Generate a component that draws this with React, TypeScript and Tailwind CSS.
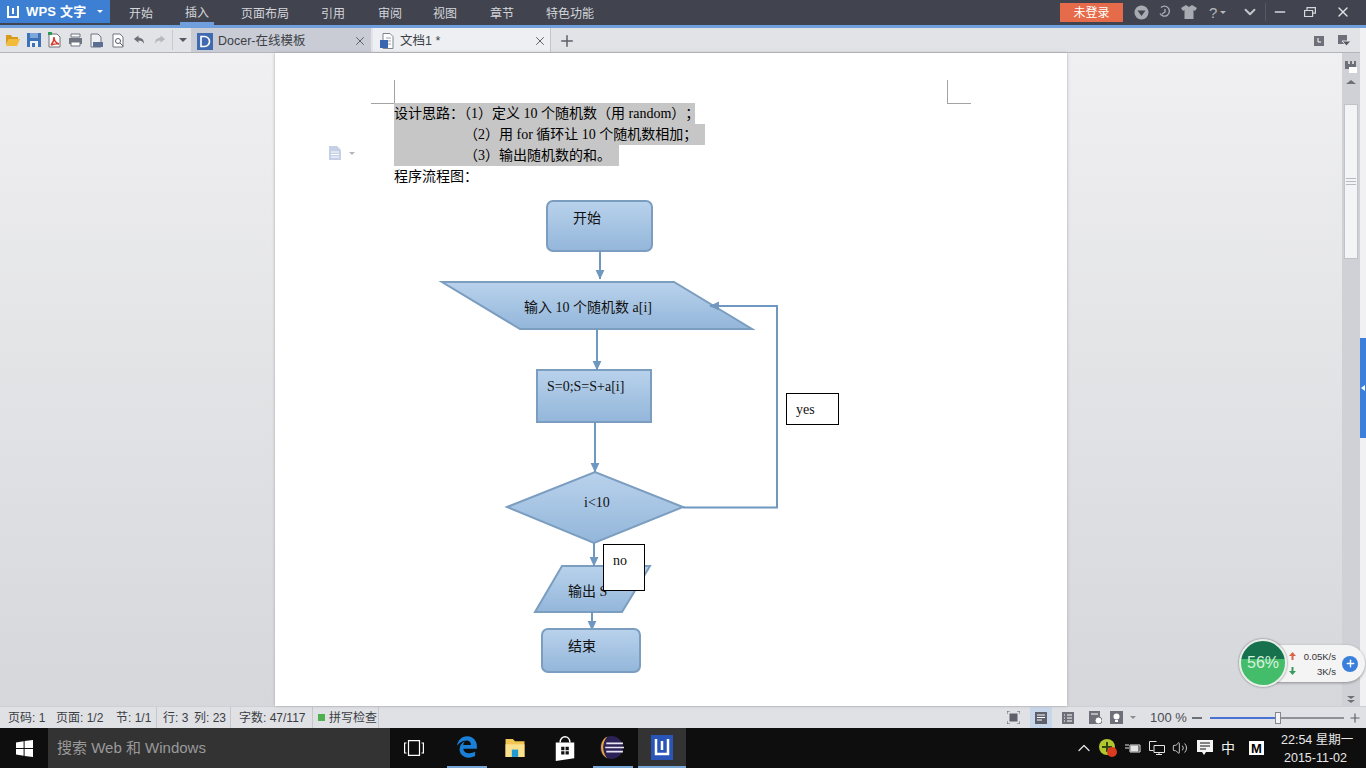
import { FaEdgeLegacy } from 'react-icons/fa';
import { Plus, X, ChevronDown, Minus, ChevronUp, Volume2 } from 'lucide-react';

const uiFont = "font-['Liberation_Sans','Noto_Sans_CJK_SC',sans-serif]";
const docFont = "font-['Liberation_Serif','Noto_Sans_CJK_SC',serif]";

const menus = [
  { label: '开始', w: 'w-[56px]' },
  { label: '插入', w: 'w-[56px]' },
  { label: '页面布局', w: 'w-[80px]' },
  { label: '引用', w: 'w-[57px]' },
  { label: '审阅', w: 'w-[55px]' },
  { label: '视图', w: 'w-[57px]' },
  { label: '章节', w: 'w-[56px]' },
  { label: '特色功能', w: 'w-[70px]' },
];

function WindowsLogo({ size = 17 }: { size?: number }) {
  return (
    <svg width={size} height={size} viewBox="0 0 17 17" fill="#fff">
      <path d="M0 2.4 7.6 1.2V8H0zM8.6 1 17 0v8H8.6zM0 9h7.6v6.8L0 14.6zM8.6 9H17v8l-8.4-1.1z" />
    </svg>
  );
}

function QuickIcons() {
  return (
    <div className="flex items-center w-[191px] h-full pl-[5px]">
      {/* open */}
      <svg width="16" height="16" viewBox="0 0 16 16" className="mr-[6px]">
        <path d="M1 3h5l1 2h6v2H4L1 13z" fill="#d89a1c" />
        <path d="M4 7h11l-3 7H1z" fill="#f2bb3a" />
      </svg>
      {/* save */}
      <svg width="14" height="14" viewBox="0 0 14 14" className="mr-[6px]">
        <path d="M0 0h14v14H0z" fill="#3c73b8" />
        <path d="M3 0h8v5H3z" fill="#7fa6d8" />
        <path d="M3 8h8v6H3z" fill="#eef2f8" />
        <path d="M5 10h3v4H5z" fill="#3c73b8" />
      </svg>
      {/* pdf */}
      <svg width="14" height="16" viewBox="0 0 14 16" className="mr-[7px]">
        <path d="M2 2h8l3 3v10H2z" fill="#fff" stroke="#6c7078" />
        <path d="M4 13c2-2 3-5 3-8 0 3 2 6 5 7-3-.5-5 0-8 1z" fill="none" stroke="#d43a2e" strokeWidth="1.400" />
        <path d="M1 0h4v3H1z" fill="#2f9a54" />
      </svg>
      {/* print */}
      <svg width="15" height="14" viewBox="0 0 15 14" className="mr-[6px]">
        <path d="M3 1h9v3H3z" fill="#fff" stroke="#6f7580" />
        <path d="M1 5h13v6H1z" fill="#6f7580" />
        <path d="M3 9h9v4H3z" fill="#fff" stroke="#6f7580" />
      </svg>
      {/* print preview */}
      <svg width="15" height="15" viewBox="0 0 15 15" className="mr-[7px]">
        <path d="M2 1h7l3 3v10H2z" fill="#eef0f4" stroke="#6f7580" />
        <path d="M4 9h10v5H4z" fill="#5b6f93" />
      </svg>
      {/* preview */}
      <svg width="14" height="15" viewBox="0 0 14 15" className="mr-[8px]">
        <path d="M2 1h7l3 3v10H2z" fill="#fff" stroke="#6f7580" />
        <circle cx="7" cy="8" r="2.500" fill="none" stroke="#555b66" />
        <path d="M9 10l3 3" stroke="#555b66" />
      </svg>
      {/* undo */}
      <svg width="12" height="12" viewBox="0 0 13 12" className="mr-[9px]">
        <path d="M6 1 1 5l5 4V6.500c3 0 4.500 1 6 3.500 0-4-2-6.500-6-6.500z" fill="#6c7078" />
      </svg>
      {/* redo */}
      <svg width="12" height="12" viewBox="0 0 13 12" className="mr-[6px]">
        <path d="M7 1l5 4-5 4V6.500c-3 0-4.500 1-6 3.500 0-4 2-6.500 6-6.500z" fill="#b4b7bf" />
      </svg>
      <div className="w-px h-[20px] bg-[#c9cad0] mr-[6px]" />
      <div className="w-0 h-0 border-x-[4px] border-x-transparent border-t-[4px] border-t-[#555964]" />
    </div>
  );
}

function TitleBar() {
  return (
    <div className={`h-[28px] shrink-0 bg-[#41444f] border-b-[3px] border-[#6f9fdc] flex text-[12px] text-[#d5d6da] ${uiFont}`}>
      <div className="w-[110px] h-[23px] bg-[#3d7fd3] flex items-center pl-[6px] text-white">
        <svg width="14" height="14" viewBox="0 0 14 14" className="mr-[6px]">
          <path d="M2 1v11h10V1M7 3v6" fill="none" stroke="#fff" strokeWidth="2" />
        </svg>
        <span className="text-[13px] font-bold tracking-[0.2px]">WPS 文字</span>
        <span className="ml-[11px] w-0 h-0 border-x-[3px] border-x-transparent border-t-[3px] border-t-white" />
      </div>
      <div className="flex pl-[19px] h-[25px]">
        {menus.map((m, i) => (
          <div key={m.label} className={`${m.w} h-full flex items-center`}>
            <span className={`pt-[3px] px-[5px] -ml-[5px] h-[25px] flex items-center ${i === 1 ? 'border-b-[3px] border-[#6f9fdc]' : ''}`}>
              {m.label}
            </span>
          </div>
        ))}
      </div>
      <div className="flex-1" />
      <div className="w-[63px] h-[19px] mt-[3px] bg-[#e66b4a] text-white flex items-center justify-center text-[12px] mr-[8px]">
        未登录
      </div>
      <div className="flex items-center h-[24px] text-[#a9abb2]">
        <svg width="15" height="15" viewBox="0 0 15 15" className="mx-[3px]">
          <circle cx="7.500" cy="7.500" r="7" fill="#a9abb2" />
          <path d="M3.500 5.500h8L7.500 11z" fill="#41444f" />
        </svg>
        <svg width="14" height="14" viewBox="0 0 14 14" className="ml-[6px]" fill="none" stroke="#a9abb2" strokeWidth="1.400">
          <path d="M3 2.500a5 5 0 1 1-1 6M7 4v3l-3 2" />
        </svg>
        <svg width="16" height="14" viewBox="0 0 16 14" className="ml-[9px]">
          <path d="M5 0 0 3l2 3 1.500-1v9h9V5L14 6l2-3-5-3-3 2z" fill="#a9abb2" />
        </svg>
        <span className="ml-[12px] text-[15px] leading-none w-[22px] text-[#b5b7bd]">?</span>
        <span className="-ml-[11px] w-0 h-0 border-x-[3px] border-x-transparent border-t-[3px] border-t-[#b5b7bd]" />
        <ChevronDown size={18} strokeWidth={2.500} className="ml-[15px] text-[#c6c7cc]" />
        <div className="w-px h-[18px] bg-[#565964] ml-[6px]" />
        <Minus size={16} strokeWidth={2} className="ml-[6px] text-[#d5d6da]" />
        <svg width="12" height="10" viewBox="0 0 12 10" className="ml-[16px]" fill="none" stroke="#d5d6da" strokeWidth="1.200">
          <path d="M.6 3.500h8v6h-8zM3 3V.6h8.400v5.500H9" />
        </svg>
        <X size={16} strokeWidth={2} className="ml-[19px] mr-[15px] text-[#e3e4e7]" />
      </div>
    </div>
  );
}

function TabBar() {
  return (
    <div className={`h-[25px] shrink-0 flex bg-[#e2e3e7] text-[12px] ${uiFont}`}>
      <div className="flex-1 min-w-0 flex border-b border-[#b4b5ba]">
        <QuickIcons />
        <div className="w-[180px] bg-[#c9ccd5] flex items-center pl-[6px] pt-[2px] text-[#3c3f46]">
          <svg width="16" height="17" viewBox="0 0 16 17" className="mr-[5px]">
            <path d="M0 0h16v17H0z" fill="#3f6ab0" />
            <path d="M4 3.500h3.500a5 5 0 0 1 0 10H4z" fill="none" stroke="#fff" strokeWidth="1.600" />
          </svg>
          <span className="text-[12.500px]">Docer-在线模板</span>
          <X size={14} strokeWidth={1.500} className="ml-auto mr-[4px] text-[#4c4f56]" />
        </div>
        <div className="w-[2px]" />
        <div className="w-[178px] bg-[#eeeff2] flex items-center pl-[7px] pt-[2px] text-[#3c3f46] border-r border-[#c4c5ca]">
          <svg width="14" height="16" viewBox="0 0 14 16" className="mr-[6px]">
            <path d="M3 .5h7l3 3v12H3z" fill="#fff" stroke="#7f838c" />
            <path d="M6 5h5M6 8h5M6 11h5" stroke="#9aa0ac" />
            <path d="M0 7h8v8H0z" fill="#3a66b0" />
          </svg>
          <span className="text-[12.500px]">文档1 *</span>
          <X size={14} strokeWidth={1.500} className="ml-auto mr-[3px] text-[#4c4f56]" />
        </div>
        <div className="w-[31px] flex items-center justify-center pt-[2px]">
          <Plus size={18} strokeWidth={2} className="text-[#5d606a]" />
        </div>
        <div className="flex-1" />
        <div className="flex items-center pr-[9px] pt-[2px]">
          <svg width="10" height="10" viewBox="0 0 10 10">
            <path d="M0 0h10v10H0z" fill="#6e7079" />
            <path d="M4 2v4h3" stroke="#fff" fill="none" />
          </svg>
          <svg width="13" height="12" viewBox="0 0 13 12" className="ml-[14px]">
            <path d="M0 0h9v9H0z" fill="#6e7079" />
            <path d="M4 6h9l-4.500 5z" fill="#55575f" stroke="#e2e3e7" />
          </svg>
        </div>
      </div>
      <div className="w-[6px] bg-[#f1f1f3]" />
    </div>
  );
}

function Flowchart() {
  const stroke = '#7b9dc0';
  return (
    <svg width="792" height="653" viewBox="275 53 792 653" className="absolute inset-0">
      <defs>
        <linearGradient id="fill" x1="0" y1="0" x2="0" y2="1">
          <stop offset="0" stopColor="#b9d2ec" />
          <stop offset="1" stopColor="#93b6da" />
        </linearGradient>
        <marker id="head" markerWidth="5" markerHeight="5" refX="4.500" refY="2.500" orient="auto" markerUnits="strokeWidth">
          <path d="M0 .3 4.800 2.500 0 4.700z" fill="#6f97bf" />
        </marker>
      </defs>
      <g fill="url(#fill)" stroke={stroke} strokeWidth="2">
        <rect x="547" y="201" width="105" height="50" rx="6" />
        <path d="M442 282H674L752 329H520z" />
        <rect x="537" y="370" width="114" height="52" />
        <path d="M507 507 595 472 683 507 594 543z" />
        <path d="M562 566H650L622 612H535z" />
      </g>
      <g fill="none" stroke="#6f97bf" strokeWidth="2">
        <path d="M600 251V279" markerEnd="url(#head)" />
        <path d="M597 329V370" markerEnd="url(#head)" />
        <path d="M595 422V472" markerEnd="url(#head)" />
        <path d="M594 543V566" markerEnd="url(#head)" />
        <path d="M592 612V630" markerEnd="url(#head)" />
        <path d="M683 507.500H777V306H710" markerEnd="url(#head)" />
      </g>
      <rect x="542" y="629" width="98" height="43" rx="6" fill="url(#fill)" stroke={stroke} strokeWidth="2" />
    </svg>
  );
}

function DocPage() {
  const label = 'absolute leading-[20px] whitespace-nowrap text-[14px] text-[#111]';
  return (
    <div className={`relative w-[792px] bg-white shadow-[0_0_3px_#a8a9ae] ${docFont} text-[14px] text-black`}>
      <div className="absolute left-[119px] top-[27px] w-px h-[23px] bg-[#a3a3a3]" />
      <div className="absolute left-[96px] top-[50px] w-[23px] h-px bg-[#a3a3a3]" />
      <div className="absolute left-[672px] top-[27px] w-px h-[23px] bg-[#a3a3a3]" />
      <div className="absolute left-[672px] top-[50px] w-[24px] h-px bg-[#a3a3a3]" />
      <Flowchart />
      <div className="absolute left-[53px] top-[93px] flex items-center">
        <svg width="14" height="14" viewBox="0 0 14 14">
          <path d="M1 0h8l4 4v10H1z" fill="#c4d0e6" />
          <path d="M3 6h8M3 8.500h8M3 11h8" stroke="#fff" />
        </svg>
        <span className="ml-[7px] w-0 h-0 border-x-[3px] border-x-transparent border-t-[3px] border-t-[#b5b6bb]" />
      </div>
      <div className="relative pt-[50px] pl-[119px] leading-[21px]">
        <div className="w-[301px] bg-[#c6c6c6] whitespace-nowrap">
          设计思路：（1）定义 10 个随机数（用 random）<span className="ml-[7px]">；</span>
        </div>
        <div className="w-[311px] bg-[#c6c6c6] pl-[70px] whitespace-nowrap">（2）用 for 循环让 10 个随机数相加；</div>
        <div className="w-[225px] bg-[#c6c6c6] pl-[70px] whitespace-nowrap">（3）输出随机数的和。</div>
        <div className="whitespace-nowrap">程序流程图：</div>
      </div>
      <span className={`${label} left-[298px] top-[156px]`}>开始</span>
      <span className={`${label} left-[249px] top-[245px]`}>输入 10 个随机数 a[i]</span>
      <span className={`${label} left-[272px] top-[324px]`}>S=0;S=S+a[i]</span>
      <span className={`${label} left-[309px] top-[440px]`}>i&lt;10</span>
      <span className={`${label} left-[293px] top-[529px]`}>输出 S</span>
      <span className={`${label} left-[293px] top-[584px]`}>结束</span>
      <div className={`${label} left-[511px] top-[340px] w-[53px] h-[32px] bg-white border border-black pl-[9px] pt-[6px]`}>yes</div>
      <div className={`${label} left-[328px] top-[491px] w-[42px] h-[47px] bg-white border border-black pl-[9px] pt-[6px]`}>no</div>
    </div>
  );
}

function Scrollbar() {
  return (
    <div className="w-[18px] bg-[#d0d1d6] flex flex-col items-center">
      <svg width="13" height="13" viewBox="0 0 13 13" className="mt-[8px]">
        <path d="M0 0h11v8H0z" fill="#6e7079" />
        <path d="M3 0h2v3H3zM7 0h2v3H7z" fill="#d0d1d6" />
        <path d="M4 6h8v6H4z" fill="#fff" />
      </svg>
      <div className="mt-[6px] w-0 h-0 border-x-[5px] border-x-transparent border-b-[4px] border-b-[#6e7079]" />
      <div className="mt-[20px] w-[14px] h-[155px] bg-[#f4f4f6] border border-[#c1c2c7] flex flex-col justify-center gap-[2px] items-center">
        <div className="w-[10px] h-px bg-[#b9bac0]" />
        <div className="w-[10px] h-px bg-[#b9bac0]" />
        <div className="w-[10px] h-px bg-[#b9bac0]" />
      </div>
      <div className="flex-1" />
      <div className="mb-[3px] flex flex-col gap-[1px]">
        <div className="w-0 h-0 border-x-[4px] border-x-transparent border-t-[3px] border-t-[#6e7079]" />
        <div className="w-0 h-0 border-x-[4px] border-x-transparent border-t-[3px] border-t-[#6e7079]" />
      </div>
    </div>
  );
}

function Workspace() {
  return (
    <div className="flex-1 min-h-0 flex bg-gradient-to-b from-[#f0f0f2] to-[#d6d7db]">
      <div className="w-[275px]" />
      <DocPage />
      <div className="flex-1" />
      <Scrollbar />
      <div className="w-[6px] bg-[#f1f1f3] flex flex-col">
        <div className="h-[285px]" />
        <div className="h-[100px] bg-[#3c7fdb] flex items-center">
          <div className="w-0 h-0 border-y-[3px] border-y-transparent border-r-[4px] border-r-white ml-[1px]" />
        </div>
      </div>
    </div>
  );
}

function StatusBar() {
  const sep = 'h-full border-r border-[#c6c7cc]';
  return (
    <div className={`h-[22px] shrink-0 bg-[#e0e1e5] flex items-center text-[12px] text-[#3b3d44] ${uiFont} border-t border-[#cfd0d5]`}>
      <div className={`${sep} w-[157px] flex items-center pl-[8px] whitespace-nowrap`}>
        <span className="w-[48px]">页码: 1</span>
        <span className="w-[60px]">页面: 1/2</span>
        <span>节: 1/1</span>
      </div>
      <div className={`${sep} w-[74px] flex items-center pl-[6px] whitespace-nowrap`}>
        <span className="w-[31px]">行: 3</span>
        <span>列: 23</span>
      </div>
      <div className={`${sep} w-[82px] flex items-center pl-[8px] whitespace-nowrap`}>字数: 47/117</div>
      <div className={`${sep} w-[66px] flex items-center pl-[5px] whitespace-nowrap`}>
        <span className="w-[7px] h-[7px] bg-[#4fb04f] mr-[4px]" />
        拼写检查
      </div>
      <div className="flex-1" />
      <div className="flex items-center h-full">
        <svg width="13" height="13" viewBox="0 0 13 13" fill="#5d606a">
          <path d="M2.500 2.500h8v8h-8z" />
          <path d="M0 3V0h3M10 0h3v3M13 10v3h-3M3 13H0v-3" fill="none" stroke="#5d606a" />
        </svg>
        <div className="w-[22px] h-full bg-[#c8d6ea] ml-[10px] flex items-center justify-center">
          <svg width="12" height="12" viewBox="0 0 12 12">
            <path d="M0 0h12v12H0z" fill="#5d606a" />
            <path d="M2 3h8M2 5.500h8M2 8h5" stroke="#fff" />
          </svg>
        </div>
        <svg width="12" height="12" viewBox="0 0 12 12" className="ml-[10px]">
          <path d="M0 0h12v12H0z" fill="#6d7079" />
          <path d="M2 3h1M5 3h5M2 6h1M5 6h5M2 9h1M5 9h5" stroke="#fff" />
        </svg>
        <svg width="13" height="13" viewBox="0 0 13 13" className="ml-[15px]">
          <path d="M0 0h11v13H0z" fill="#6d7079" />
          <path d="M2 3h7" stroke="#fff" />
          <circle cx="9.500" cy="9.500" r="3.500" fill="#fff" stroke="#6d7079" />
        </svg>
        <svg width="13" height="13" viewBox="0 0 13 13" className="ml-[8px]">
          <path d="M0 0h13v13H0z" fill="#6d7079" />
          <circle cx="6.500" cy="5.500" r="3" fill="#fff" />
          <path d="M5 9h3v2H5z" fill="#fff" />
        </svg>
        <span className="ml-[7px] w-0 h-0 border-x-[3px] border-x-transparent border-t-[3px] border-t-[#8a8c93]" />
        <span className="ml-[14px] w-[42px] text-[13px] text-[#4a4c53]">100 %</span>
        <div className="w-[10px] h-[2px] bg-[#6d7079]" />
        <div className="ml-[8px] w-[134px] h-[2px] bg-[#8f9197] flex items-center relative">
          <div className="w-[65px] h-[2px] bg-[#4a72d4]" />
          <div className="w-[6px] h-[12px] bg-[#f3f3f5] border border-[#85878e]" />
        </div>
        <Plus size={14} strokeWidth={2} className="ml-[4px] mr-[4px] text-[#5d606a]" />
      </div>
    </div>
  );
}

function Taskbar() {
  return (
    <div className={`h-[40px] shrink-0 bg-[#0e0e0e] flex items-center ${uiFont}`}>
      <div className="w-[48px] h-full flex items-center justify-center">
        <WindowsLogo />
      </div>
      <div className="w-[342px] h-full bg-[#333333] flex items-center pl-[9px] text-[15px] text-[#9a9a9a]">搜索 Web 和 Windows</div>
      <div className="flex h-full items-stretch">
        <div className="w-[47px] flex items-center justify-center">
          <svg width="20" height="16" viewBox="0 0 20 16" fill="none" stroke="#fff" strokeWidth="1.200">
            <path d="M4.500 .6h11v14.800h-11zM2.500 3H.6v10h1.900M17.500 3h1.900v10h-1.900" />
          </svg>
        </div>
        <div className="w-[10px]" />
        <div className="w-[40px] flex items-center justify-center border-b-2 border-[#76a7d6]">
          <FaEdgeLegacy size={22} className="text-[#1a7fd6]" />
        </div>
        <div className="w-[55px] pl-[1px] flex items-center justify-center">
          <svg width="22" height="20" viewBox="0 0 20 19">
            <path d="M1 1h7l2 2h9v15H1z" fill="#f2c552" />
            <path d="M1 6h18v12H1z" fill="#fbe08d" />
            <path d="M7 11h6v7H7z" fill="#1f9ad6" />
          </svg>
        </div>
        <div className="w-[46px] flex items-center justify-center">
          <svg width="22" height="25" viewBox="0 0 19 23">
            <path d="M5 6c0-7 9-7 9 0" fill="none" stroke="#fff" strokeWidth="1.400" />
            <path d="M1 6h17v14.500L1 23z" fill="#fff" />
            <path d="M6 10h3v3H6zM10 10h3v3h-3zM6 14h3v3H6zM10 14h3v3h-3z" fill="#111" />
          </svg>
        </div>
        <div className="w-[40px] ml-[5px] flex items-center justify-center border-b-2 border-[#76a7d6] pr-[3px]">
          <svg width="25" height="25" viewBox="0 0 24 24">
            <circle cx="12" cy="12" r="11" fill="#2c2255" />
            <path d="M8 1.500C3 4 2 9 2 12s1 8 6 10.500C5 19 4 15 4 12s1-7 4-10.500z" fill="#e8a93c" />
            <path d="M7 8h16M6 12h18M7 16h16" stroke="#e9e6f5" strokeWidth="1.600" />
          </svg>
        </div>
        <div className="w-[48px] ml-[5px] bg-[#333] flex items-center justify-center border-b-2 border-[#76a7d6]">
          <svg width="22" height="25" viewBox="0 0 22 25">
            <path d="M0 0h22v25H0z" fill="#2a55b8" />
            <path d="M5 4v15h12V4M11 6v9" fill="none" stroke="#fff" strokeWidth="2.500" />
          </svg>
        </div>
      </div>
      <div className="flex-1" />
      <div className="flex items-center h-full text-white">
        <ChevronUp size={20} strokeWidth={1.500} className="text-[#e4e4e4] mr-[5px]" />
        <svg width="18" height="18" viewBox="0 0 18 18" className="mr-[8px]">
          <circle cx="8" cy="8" r="8" fill="#b3c62e" />
          <path d="M8 3v10M3 8h10" stroke="#2b4a12" strokeWidth="2" />
          <circle cx="13" cy="13" r="5" fill="#dc3b20" />
        </svg>
        <svg width="16" height="12" viewBox="0 0 16 12" className="mr-[8px]">
          <path d="M5 3h10v7H5z" fill="none" stroke="#e4e4e4" />
          <path d="M6 4h7v5H6zM0 3h4M0 6h4" fill="#e4e4e4" stroke="#e4e4e4" />
        </svg>
        <svg width="16" height="14" viewBox="0 0 16 14" fill="none" stroke="#e4e4e4" className="mr-[7px]">
          <path d="M.5.500h7M.5.500v9h4M5 4.500h10.500v7h-10.500zM10 11.500v2M7 13.500h6" />
        </svg>
        <Volume2 size={16} strokeWidth={1.300} className="text-[#e4e4e4] mr-[9px]" />
        <svg width="16" height="16" viewBox="0 0 16 16" className="mr-[8px]">
          <path d="M0 0h16v12H9l-2 3-2-3H0z" fill="#f5f5f5" />
          <path d="M3 3h10M3 6h10M3 9h6" stroke="#111" />
        </svg>
        <span className="text-[14px] w-[28px] text-[#f0f0f0]">中</span>
        <span className="w-[15px] h-[14px] bg-white text-black text-[13px] font-bold flex items-center justify-center leading-none mr-[17px]">M</span>
        <div className="w-[85px] text-[12.500px] leading-[18px] text-[#e8e8e8] flex flex-col pr-[11px] pt-[1px]">
          <span className="whitespace-nowrap">22:54 星期一</span>
          <span className="whitespace-nowrap pl-[3px]">2015-11-02</span>
        </div>
      </div>
    </div>
  );
}

function SpeedWidget() {
  return (
    <div className={`absolute left-[1239px] top-[639px] flex items-center h-[48px] ${uiFont}`}>
      <div className="absolute left-[24px] top-[6px] w-[102px] h-[37px] rounded-r-[19px] bg-[#f4f4f5] shadow-[0_1px_3px_#8b8c90] flex items-center">
        <div className="w-[33px] flex flex-col items-end gap-[7px] pr-[0px]">
          <svg width="7" height="8" viewBox="0 0 7 8">
            <path d="M3.500 0 7 4H4.500v4h-2V4H0z" fill="#d9644a" />
          </svg>
          <svg width="7" height="8" viewBox="0 0 7 8">
            <path d="M3.500 8 7 4H4.500V0h-2v4H0z" fill="#3a9a5c" />
          </svg>
        </div>
        <div className="w-[40px] text-right text-[9.500px] leading-[15px] text-[#333] whitespace-nowrap">
          <div>0.05K/s</div>
          <div>3K/s</div>
        </div>
        <div className="ml-[6px] w-[16px] h-[16px] rounded-full bg-[#3a7fdc] flex items-center justify-center">
          <Plus size={11} strokeWidth={3} className="text-white" />
        </div>
      </div>
      <div className="relative w-[48px] h-[48px] rounded-full bg-gradient-to-b from-[#17714d] from-40% to-[#43bd6a] to-40% border-2 border-[#e9eeea] shadow-[0_0_2px_#555] flex items-center justify-center text-[16px] text-[#d8f0df]">
        56%
      </div>
    </div>
  );
}

export default function App() {
  return (
    <div className="relative w-[1366px] h-[768px] overflow-hidden flex flex-col bg-[#e2e3e7]">
      <TitleBar />
      <TabBar />
      <Workspace />
      <StatusBar />
      <Taskbar />
      <SpeedWidget />
    </div>
  );
}
